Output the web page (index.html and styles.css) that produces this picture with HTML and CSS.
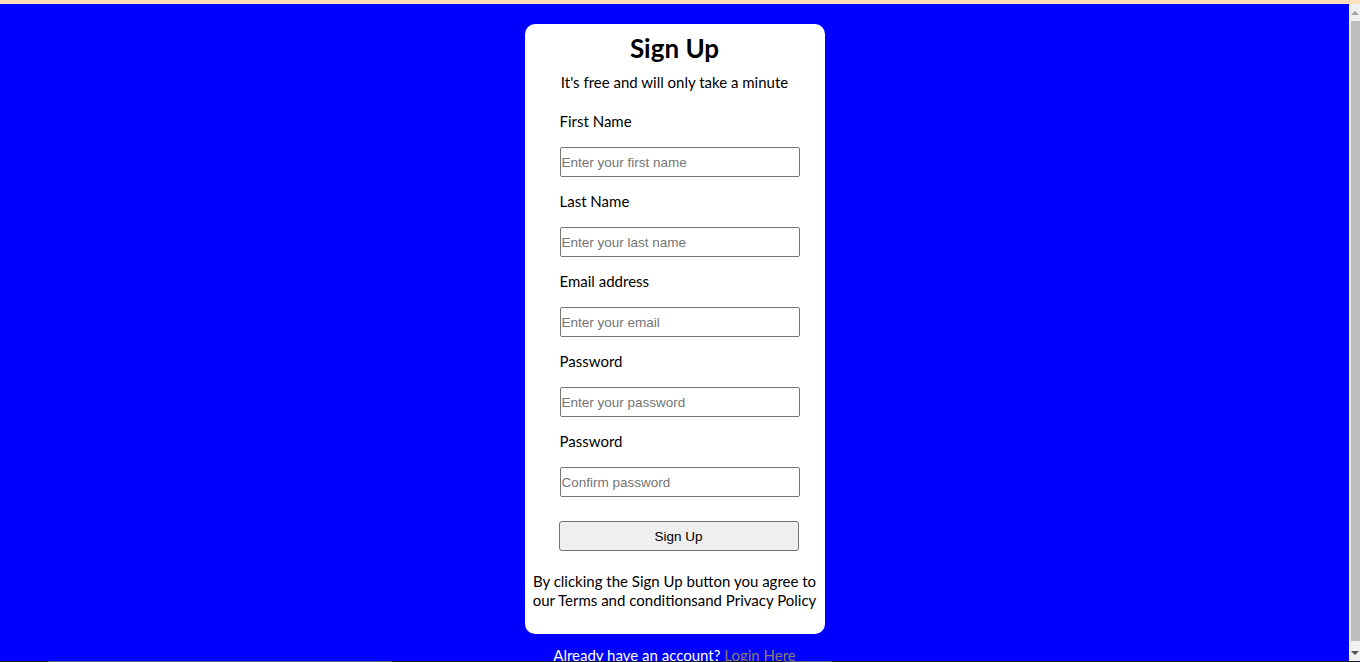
FILE: index.html
```html
<!DOCTYPE html>
<html lang="en">
<head>
<meta charset="utf-8">
<title>Sign Up</title>
<link rel="stylesheet" href="styles.css">
</head>
<body>
<div class="topbar"></div>
<div class="window">
  <main class="page">
    <form class="card">
      <h1 class="title">Sign Up</h1>
      <p class="subtitle">It's free and will only take a minute</p>
      <div class="field">
        <label class="label">First Name</label>
        <input class="input" type="text" placeholder="Enter your first name">
      </div>
      <div class="field">
        <label class="label">Last Name</label>
        <input class="input" type="text" placeholder="Enter your last name">
      </div>
      <div class="field">
        <label class="label">Email address</label>
        <input class="input" type="email" placeholder="Enter your email">
      </div>
      <div class="field">
        <label class="label">Password</label>
        <input class="input" type="password" placeholder="Enter your password">
      </div>
      <div class="field">
        <label class="label">Password</label>
        <input class="input" type="password" placeholder="Confirm password">
      </div>
      <button class="btn" type="button">Sign Up</button>
      <p class="terms">By clicking the Sign Up button you agree to our Terms and conditionsand Privacy Policy</p>
    </form>
    <p class="already">Already have an account? <a class="login" href="#">Login Here</a></p>
  </main>
  <div class="scrollbar" aria-hidden="true">
    <div class="sb-btn"><span class="arrow-up"></span></div>
    <div class="sb-track"><div class="sb-thumb"></div></div>
    <div class="sb-btn"><span class="arrow-down"></span></div>
  </div>
</div>
<div class="taskline"></div>
</body>
</html>
```

FILE: styles.css
```css
html, body {
  margin: 0;
  padding: 0;
  height: 100%;
  overflow: hidden;
}
body {
  font-family: "Lato", "Open Sans", sans-serif;
  display: flex;
  flex-direction: column;
}
.topbar {
  height: 4px;
  background: #fddfbb;
  flex: none;
}
.window {
  flex: 1;
  min-height: 0;
  display: flex;
  flex-direction: row;
}
.page {
  flex: 1;
  overflow: hidden;
  background: #0000ff;
  display: flex;
  flex-direction: column;
  align-items: center;
  padding-top: 20px;
}
.scrollbar {
  width: 11px;
  flex: none;
  background: #f0f0f0;
  display: flex;
  flex-direction: column;
}
.sb-btn {
  height: 17px;
  flex: none;
  display: flex;
  align-items: center;
  justify-content: center;
  padding-left: 1px;
}
.arrow-up {
  width: 0;
  height: 0;
  border-left: 4px solid transparent;
  border-right: 4px solid transparent;
  border-bottom: 4px solid #a3a3a3;
}
.arrow-down {
  width: 0;
  height: 0;
  border-left: 4px solid transparent;
  border-right: 4px solid transparent;
  border-top: 4px solid #505050;
}
.sb-track {
  flex: 1;
  display: flex;
  padding: 0 0 3px 2px;
}
.sb-thumb {
  flex: 1;
  background: #bdbdbd;
}
.taskline {
  height: 1px;
  flex: none;
  background: linear-gradient(to right, #1c1c2c 0, #1c1c2c 48px, #5a5a7a 48px, #5a5a7a 392px, #1c1c2c 392px, #1c1c2c 785px, #5a5a7a 785px, #5a5a7a 832px, #1c1c2c 832px);
}
.card {
  width: 300px;
  box-sizing: border-box;
  background: #fff;
  border-radius: 10px;
  padding: 10px 35px 24px;
  display: flex;
  flex-direction: column;
  align-items: stretch;
  flex: none;
}
.title {
  margin: 0;
  font-size: 26px;
  line-height: 29px;
  font-weight: 700;
  text-align: center;
  color: #000;
}
.subtitle {
  margin: 9px -20px 0;
  font-size: 15px;
  line-height: 20px;
  text-align: center;
  color: #000;
}
.field {
  display: flex;
  flex-direction: column;
  align-items: flex-start;
  margin-top: 14px;
}
.field:first-of-type {
  margin-top: 19px;
}
.label {
  font-size: 15px;
  line-height: 20px;
  color: #000;
  margin-bottom: 16px;
}
.input {
  width: 240px;
  height: 30px;
  box-sizing: border-box;
  border: 1px solid #767676;
  border-radius: 2px;
  padding: 1px 1px;
  font-family: "Liberation Sans", Arial, sans-serif;
  font-size: 13.5px;
  margin: 0;
}
.input::placeholder {
  color: #757575;
}
.btn {
  margin: 24px 0 0 -1px;
  width: 240px;
  height: 30px;
  box-sizing: border-box;
  border: 1px solid #767676;
  border-radius: 3px;
  background: #efefef;
  font-family: "Liberation Sans", Arial, sans-serif;
  font-size: 13.5px;
  color: #000;
}
.terms {
  margin: 21px -33px 0;
  font-size: 15px;
  line-height: 19px;
  text-align: center;
  color: #000;
}
.already {
  margin: 11px 0 0;
  font-size: 15px;
  line-height: 20px;
  color: #fff;
  white-space: nowrap;
}
.login {
  color: #8a7f66;
  text-decoration: none;
}
```
